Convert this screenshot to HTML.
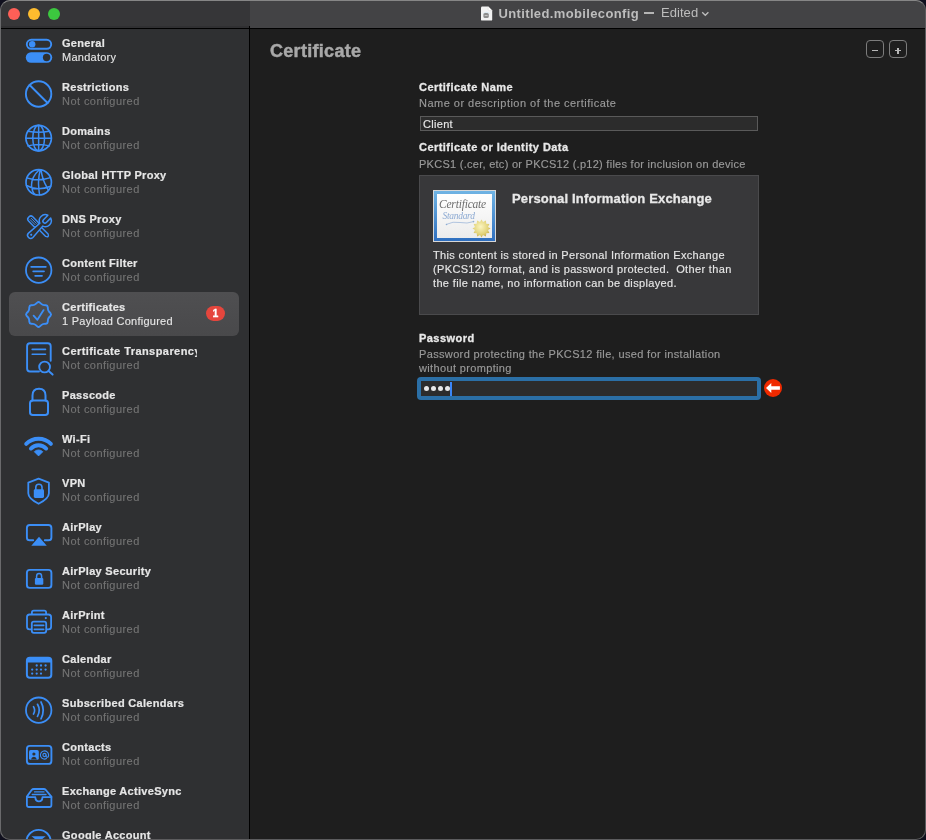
<!DOCTYPE html>
<html><head><meta charset="utf-8">
<style>
*{margin:0;padding:0;box-sizing:border-box}
html,body{width:926px;height:840px;overflow:hidden;background:#10101e;font-family:"Liberation Sans",sans-serif}
#win{position:absolute;left:0;top:0;width:926px;height:840px;border-radius:10px;overflow:hidden;background:#1e1e1e;will-change:transform}
#winborder{position:absolute;left:0;top:0;width:926px;height:840px;border-radius:10px;border:1px solid #5c5c5e;border-top-color:#868686;border-left-color:#6a6a6c;pointer-events:none;z-index:50}
#tb-side{position:absolute;left:0;top:0;width:250px;height:28px;background:#363638}
#tb-main{position:absolute;left:250px;top:0;width:676px;height:28px;background:#434345}
#tb-line{position:absolute;left:0;top:28px;width:926px;height:1px;background:#000;z-index:6}
#side{position:absolute;left:0;top:28px;width:249px;height:812px;background:#2f3032;overflow:hidden}
#vline{position:absolute;left:249px;top:26px;width:1px;height:814px;background:#000;z-index:5}
#main{position:absolute;left:250px;top:29px;width:676px;height:811px;background:#1e1e1e}
.light{position:absolute;top:8px;width:12px;height:12px;border-radius:50%}
.row{position:absolute;left:0;width:249px;height:44px}
.row .t{position:absolute;left:62px;top:9px;font-size:11px;font-weight:bold;color:#e6e6e6;white-space:nowrap;letter-spacing:0.3px;width:135px;overflow:hidden;-webkit-text-stroke:0.2px #e6e6e6}
.row .s{position:absolute;left:62px;top:23px;font-size:11px;color:#747474;white-space:nowrap;letter-spacing:0.44px;-webkit-text-stroke:0.12px currentColor}
.row svg{position:absolute;left:0;top:0}
.sel{position:absolute;left:9px;top:0;width:230px;height:44px;border-radius:6px;background:linear-gradient(#4f4f51,#49494b)}
.badge{position:absolute;left:206px;top:14.3px;width:19px;height:14.7px;border-radius:7.4px;background:#e5463d;color:#fff;font-size:10.5px;font-weight:bold;text-align:center;line-height:15px;-webkit-text-stroke:0.3px #fff}

.abs{position:absolute;white-space:nowrap}
.lbl{font-size:11px;font-weight:bold;color:#e8e8e8;letter-spacing:0.45px;-webkit-text-stroke:0.3px #e8e8e8}
.desc{font-size:11px;color:#9a9a9a;letter-spacing:0.35px;line-height:14px;-webkit-text-stroke:0.15px currentColor}
#title{position:absolute;left:270px;top:40.5px;font-size:18px;font-weight:bold;color:#a8a8a8;letter-spacing:0.3px;-webkit-text-stroke:0.45px #a8a8a8}
.pbtn{position:absolute;top:40px;width:18px;height:18px;border:1px solid #7c7c7c;border-radius:4px}
.field{position:absolute;left:420px;top:116px;width:338px;height:15px;background:#2c2c2c;border:1px solid #5a5a5a}
.certbox{position:absolute;left:419px;top:175px;width:340px;height:140px;background:#38383a;border:1px solid #4a4a4c}
</style></head><body>
<div id="win">
  <div id="tb-side"></div>
  <div id="tb-main"></div>
  <div style="position:absolute;left:0;top:26px;width:249px;height:2px;background:#303032"></div>
  <div class="light" style="left:8px;background:#fe5f57"></div>
  <div class="light" style="left:28px;background:#febc2e"></div>
  <div class="light" style="left:48px;background:#3cc83f"></div>
  <div id="side">
  <div style="position:absolute;left:0;top:-28px;width:249px;height:840px">
<div class="row" style="top:28px"><svg viewBox="0 0 60 44" width="60" height="44"><rect x="26.8" y="11.8" width="24.4" height="9" rx="4.5" fill="none" stroke="#3b8ef7" stroke-linecap="round" stroke-linejoin="round" stroke-width="1.9"/><circle cx="32.2" cy="16.3" r="3.2" fill="#3b8ef7"/><rect x="25.8" y="24.3" width="26.4" height="10.4" rx="5.2" fill="#3b8ef7"/><circle cx="46.6" cy="29.5" r="3.7" fill="#2f3032"/></svg><div class="t">General</div><div class="s" style="color:#e6e6e6;letter-spacing:0.25px">Mandatory</div></div>
<div class="row" style="top:72px"><svg viewBox="0 0 60 44" width="60" height="44"><circle cx="38.6" cy="22" r="12.7" fill="none" stroke="#3b8ef7" stroke-linecap="round" stroke-linejoin="round" stroke-width="1.9"/><path d="M29.6 13 L47.6 31" fill="none" stroke="#3b8ef7" stroke-linecap="round" stroke-linejoin="round" stroke-width="1.9"/></svg><div class="t">Restrictions</div><div class="s">Not configured</div></div>
<div class="row" style="top:116px"><svg viewBox="0 0 60 44" width="60" height="44"><circle cx="38.65" cy="22.1" r="12.75" fill="none" stroke="#3b8ef7" stroke-linecap="round" stroke-linejoin="round" stroke-width="1.7"/><ellipse cx="38.65" cy="22.1" rx="5.9" ry="12.75" fill="none" stroke="#3b8ef7" stroke-linecap="round" stroke-linejoin="round" stroke-width="1.5"/><path d="M38.65 9.4V34.8 M25.9 22.3H51.4 M27.9 15.2Q38.65 17.4 49.4 15.2 M27.9 29.9Q38.65 26.9 49.4 29.9" fill="none" stroke="#3b8ef7" stroke-linecap="round" stroke-linejoin="round" stroke-width="1.5"/></svg><div class="t">Domains</div><div class="s">Not configured</div></div>
<div class="row" style="top:160px"><svg viewBox="0 0 60 44" width="60" height="44"><circle cx="38.7" cy="22.3" r="12.7" fill="none" stroke="#3b8ef7" stroke-linecap="round" stroke-linejoin="round" stroke-width="1.7"/><path d="M39.3 9.8 Q31.5 17 31.5 25 Q31.8 31 34.5 34.2 M40.2 9.8 Q37.8 20 38.8 28 Q39.2 32.5 39.6 34.9 M41 9.9 Q42.5 20 46.5 26.5 Q47.5 28.5 48.3 30.3 M26.8 17.9 Q38 21.8 50.5 17.6 M26.5 25.5 Q37 31.5 50.7 26.2" fill="none" stroke="#3b8ef7" stroke-linecap="round" stroke-linejoin="round" stroke-width="1.5"/></svg><div class="t">Global HTTP Proxy</div><div class="s">Not configured</div></div>
<div class="row" style="top:204px"><svg viewBox="0 0 60 44" width="60" height="44"><g transform="rotate(45 39 23.3)"><rect x="24.6" y="20.3" width="12.4" height="6" rx="2.6" fill="none" stroke="#3b8ef7" stroke-linecap="round" stroke-linejoin="round" stroke-width="1.5"/><path d="M27.3 22.4H34.3 M27.3 24.2H34.3" fill="none" stroke="#3b8ef7" stroke-linecap="round" stroke-linejoin="round" stroke-width="0.9"/><path d="M37 21.6 H50.2 Q53.6 23.3 50.2 25 H37" fill="none" stroke="#3b8ef7" stroke-linecap="round" stroke-linejoin="round" stroke-width="1.4"/></g><g transform="rotate(-45 38 24)"><path d="M27.7 20.9 L42.64 22 A6 6 0 0 1 53.96 22 L47.8 22 A2 2 0 0 0 47.8 26 L53.96 26 A6 6 0 0 1 42.64 26 L27.7 27.1 A3.1 3.1 0 0 1 27.7 20.9 Z" fill="#2f3032" stroke="#3b8ef7" stroke-width="1.5" stroke-linejoin="round"/><circle cx="28.4" cy="24" r="1.1" fill="#3b8ef7"/></g></svg><div class="t">DNS Proxy</div><div class="s">Not configured</div></div>
<div class="row" style="top:248px"><svg viewBox="0 0 60 44" width="60" height="44"><circle cx="38.7" cy="22.2" r="12.7" fill="none" stroke="#3b8ef7" stroke-linecap="round" stroke-linejoin="round" stroke-width="1.8"/><path d="M31.2 18.8H45.8 M33.2 23.3H44 M35.2 27.8H42" fill="none" stroke="#3b8ef7" stroke-linecap="round" stroke-linejoin="round" stroke-width="1.8"/></svg><div class="t">Content Filter</div><div class="s">Not configured</div></div>
<div class="row" style="top:292px"><div class="sel"></div><div class="badge">1</div><svg viewBox="0 0 60 44" width="60" height="44"><path d="M37.25 10.58 Q38.55 9.40 39.85 10.58 L41.31 11.91 Q42.49 12.98 44.02 13.12 L45.91 13.30 Q47.60 13.45 47.75 15.14 L47.93 17.03 Q48.07 18.56 49.14 19.74 L50.47 21.20 Q51.65 22.50 50.47 23.80 L49.14 25.26 Q48.07 26.44 47.93 27.97 L47.75 29.86 Q47.60 31.55 45.91 31.70 L44.02 31.88 Q42.49 32.02 41.31 33.09 L39.85 34.42 Q38.55 35.60 37.25 34.42 L35.79 33.09 Q34.61 32.02 33.08 31.88 L31.19 31.70 Q29.50 31.55 29.35 29.86 L29.17 27.97 Q29.03 26.44 27.96 25.26 L26.63 23.80 Q25.45 22.50 26.63 21.20 L27.96 19.74 Q29.03 18.56 29.17 17.03 L29.35 15.14 Q29.50 13.45 31.19 13.30 L33.08 13.12 Q34.61 12.98 35.79 11.91 Z" fill="none" stroke="#3b8ef7" stroke-linecap="round" stroke-linejoin="round" stroke-width="1.9"/><path d="M33.6 23.6 L37.4 27.8 L43.6 18.1" fill="none" stroke="#3b8ef7" stroke-linecap="round" stroke-linejoin="round" stroke-width="1.8"/></svg><div class="t">Certificates</div><div class="s" style="color:#e6e6e6;letter-spacing:0.25px">1 Payload Configured</div></div>
<div class="row" style="top:336px"><svg viewBox="0 0 60 44" width="60" height="44"><path d="M39 35.5 H30 Q27.1 35.5 27.1 32.5 V10.2 Q27.1 7.3 30 7.3 H47.8 Q50.7 7.3 50.7 10.2 V24.8" fill="none" stroke="#3b8ef7" stroke-linecap="round" stroke-linejoin="round" stroke-width="1.9"/><path d="M32.2 13.4H45.5 M32.2 18.3H45.5" fill="none" stroke="#3b8ef7" stroke-linecap="round" stroke-linejoin="round" stroke-width="1.6"/><circle cx="44.6" cy="31" r="5.4" fill="none" stroke="#3b8ef7" stroke-linecap="round" stroke-linejoin="round" stroke-width="1.9"/><path d="M48.6 35 L52.6 38.6" fill="none" stroke="#3b8ef7" stroke-linecap="round" stroke-linejoin="round" stroke-width="2"/></svg><div class="t" style="letter-spacing:0.44px">Certificate Transparency</div><div class="s">Not configured</div></div>
<div class="row" style="top:380px"><svg viewBox="0 0 60 44" width="60" height="44"><rect x="30" y="20.5" width="18" height="14.6" rx="2.8" fill="none" stroke="#3b8ef7" stroke-linecap="round" stroke-linejoin="round" stroke-width="2"/><path d="M32.5 20.5 V15.5 Q32.5 8.7 39 8.7 Q45.5 8.7 45.5 15.5 V20.5" fill="none" stroke="#3b8ef7" stroke-linecap="round" stroke-linejoin="round" stroke-width="2"/></svg><div class="t">Passcode</div><div class="s">Not configured</div></div>
<div class="row" style="top:424px"><svg viewBox="0 0 60 44" width="60" height="44"><path d="M26.18 19.95 A17.2 17.2 0 0 1 50.92 19.95 M30.92 24.54 A10.6 10.6 0 0 1 46.18 24.54" fill="none" stroke="#3b8ef7" stroke-linecap="round" stroke-linejoin="round" stroke-width="3.9"/><path d="M38.55 31.9 L34.38 27.73 A5.9 5.9 0 0 1 42.72 27.73 Z" fill="#3b8ef7" stroke="#3b8ef7" stroke-width="1" stroke-linejoin="round"/></svg><div class="t">Wi-Fi</div><div class="s">Not configured</div></div>
<div class="row" style="top:468px"><svg viewBox="0 0 60 44" width="60" height="44"><path d="M38.6 10.7 L48.9 14.6 V25.3 Q48.9 30.6 38.6 35.8 Q28.3 30.6 28.3 25.3 V14.6 Z" fill="none" stroke="#3b8ef7" stroke-linecap="round" stroke-linejoin="round" stroke-width="1.8"/><rect x="33.8" y="21.3" width="10.2" height="8.6" rx="1.3" fill="#3b8ef7"/><path d="M35.8 21.8 V19.3 Q35.8 16.2 38.9 16.2 Q42 16.2 42 19.3 V21.8" fill="none" stroke="#3b8ef7" stroke-linecap="round" stroke-linejoin="round" stroke-width="1.6"/></svg><div class="t">VPN</div><div class="s">Not configured</div></div>
<div class="row" style="top:512px"><svg viewBox="0 0 60 44" width="60" height="44"><path d="M33.2 28.3 H29.8 Q26.9 28.3 26.9 25.4 V15.9 Q26.9 13 29.8 13 H48.4 Q51.4 13 51.4 15.9 V25.4 Q51.4 28.3 48.4 28.3 H44.8" fill="none" stroke="#3b8ef7" stroke-linecap="round" stroke-linejoin="round" stroke-width="1.9"/><path d="M39 24.7 L46.8 33.7 H31.3 Z" fill="#3b8ef7"/></svg><div class="t">AirPlay</div><div class="s">Not configured</div></div>
<div class="row" style="top:556px"><svg viewBox="0 0 60 44" width="60" height="44"><rect x="26.9" y="13.9" width="24.5" height="18" rx="2.9" fill="none" stroke="#3b8ef7" stroke-linecap="round" stroke-linejoin="round" stroke-width="1.9"/><rect x="34.9" y="21.9" width="8.4" height="6.9" rx="1.2" fill="#3b8ef7"/><path d="M36.6 22.3 V20.2 Q36.6 17.6 39.1 17.6 Q41.6 17.6 41.6 20.2 V22.3" fill="none" stroke="#3b8ef7" stroke-linecap="round" stroke-linejoin="round" stroke-width="1.5"/></svg><div class="t">AirPlay Security</div><div class="s">Not configured</div></div>
<div class="row" style="top:600px"><svg viewBox="0 0 60 44" width="60" height="44"><path d="M31.9 14.2 V12.5 Q31.9 10.6 33.8 10.6 H44.2 Q46.1 10.6 46.1 12.5 V14.2" fill="none" stroke="#3b8ef7" stroke-linecap="round" stroke-linejoin="round" stroke-width="1.8"/><path d="M31 29.4 H29.6 Q27 29.4 27 26.8 V17.1 Q27 14.5 29.6 14.5 H48.4 Q51.1 14.5 51.1 17.1 V26.8 Q51.1 29.4 48.4 29.4 H47" fill="none" stroke="#3b8ef7" stroke-linecap="round" stroke-linejoin="round" stroke-width="1.8"/><rect x="31.8" y="21.6" width="14.4" height="11.2" rx="2" fill="none" stroke="#3b8ef7" stroke-linecap="round" stroke-linejoin="round" stroke-width="1.8"/><path d="M34.3 25.4H43.7 M34.3 29.4H43.7" fill="none" stroke="#3b8ef7" stroke-linecap="round" stroke-linejoin="round" stroke-width="1.6"/><circle cx="45.8" cy="18.1" r="1.1" fill="#3b8ef7"/></svg><div class="t">AirPrint</div><div class="s">Not configured</div></div>
<div class="row" style="top:644px"><svg viewBox="0 0 60 44" width="60" height="44"><rect x="26.9" y="13.7" width="24.4" height="20.1" rx="3" fill="none" stroke="#3b8ef7" stroke-linecap="round" stroke-linejoin="round" stroke-width="2"/><path d="M26.9 16.7 Q26.9 13.7 29.9 13.7 H48.3 Q51.3 13.7 51.3 16.7 V18.4 H26.9Z" fill="#3b8ef7"/><circle cx="36.7" cy="21.5" r="1.15" fill="#3b8ef7"/><circle cx="41" cy="21.5" r="1.15" fill="#3b8ef7"/><circle cx="45.6" cy="21.5" r="1.15" fill="#3b8ef7"/><circle cx="32.2" cy="25.6" r="1.15" fill="#3b8ef7"/><circle cx="36.7" cy="25.6" r="1.15" fill="#3b8ef7"/><circle cx="41" cy="25.6" r="1.15" fill="#3b8ef7"/><circle cx="45.6" cy="25.6" r="1.15" fill="#3b8ef7"/><circle cx="32.2" cy="29.6" r="1.15" fill="#3b8ef7"/><circle cx="36.7" cy="29.6" r="1.15" fill="#3b8ef7"/><circle cx="41" cy="29.6" r="1.15" fill="#3b8ef7"/></svg><div class="t">Calendar</div><div class="s">Not configured</div></div>
<div class="row" style="top:688px"><svg viewBox="0 0 60 44" width="60" height="44"><circle cx="38.7" cy="22.2" r="12.7" fill="none" stroke="#3b8ef7" stroke-linecap="round" stroke-linejoin="round" stroke-width="1.8"/><path d="M33.5 18.6 Q35.8 22.3 33.5 26 M37.5 16.3 Q41 22.3 37.5 28.4 M41 14 Q45.5 22.3 41 30.8" fill="none" stroke="#3b8ef7" stroke-linecap="round" stroke-linejoin="round" stroke-width="1.7"/></svg><div class="t">Subscribed Calendars</div><div class="s">Not configured</div></div>
<div class="row" style="top:732px"><svg viewBox="0 0 60 44" width="60" height="44"><rect x="26.9" y="13.9" width="24.5" height="18" rx="2.9" fill="none" stroke="#3b8ef7" stroke-linecap="round" stroke-linejoin="round" stroke-width="1.9"/><rect x="29" y="18.1" width="9.8" height="9.7" rx="1.6" fill="#3b8ef7"/><circle cx="33.9" cy="22" r="1.6" fill="#2f3032"/><path d="M31 27.4 Q31.5 24.8 33.9 24.8 Q36.3 24.8 36.8 27.4Z" fill="#2f3032"/><circle cx="44.5" cy="23" r="1.6" fill="none" stroke="#3b8ef7" stroke-linecap="round" stroke-linejoin="round" stroke-width="1.1"/><path d="M46.1 23 V24 Q46.1 25.3 47.2 25.3 Q48.6 25.3 48.6 23 A4.1 4.1 0 1 0 46.5 26.6" fill="none" stroke="#3b8ef7" stroke-linecap="round" stroke-linejoin="round" stroke-width="1.1"/></svg><div class="t">Contacts</div><div class="s">Not configured</div></div>
<div class="row" style="top:776px"><svg viewBox="0 0 60 44" width="60" height="44"><path d="M26.9 20.6 L31.8 13.8 Q32.5 13 33.8 13 H43.8 Q45 13 45.7 13.8 L51.4 20.6 V28.9 Q51.4 31 49.3 31 H29 Q26.9 31 26.9 28.9 Z" fill="none" stroke="#3b8ef7" stroke-linecap="round" stroke-linejoin="round" stroke-width="1.8"/><path d="M26.9 21.1 H35.3 Q35.5 25.4 38.9 25.4 Q42.3 25.4 42.5 21.1 H51.4" fill="none" stroke="#3b8ef7" stroke-linecap="round" stroke-linejoin="round" stroke-width="1.8"/><path d="M34.5 15.9H44 M32.2 18.5H46" fill="none" stroke="#3b8ef7" stroke-linecap="round" stroke-linejoin="round" stroke-width="1.3"/></svg><div class="t">Exchange ActiveSync</div><div class="s">Not configured</div></div>
<div class="row" style="top:820px"><svg viewBox="0 0 60 44" width="60" height="44"><circle cx="38.6" cy="22.3" r="12.4" fill="none" stroke="#3b8ef7" stroke-linecap="round" stroke-linejoin="round" stroke-width="1.9"/><path d="M31.5 16.3 H45.7 L38.6 22 Z" fill="#3b8ef7"/></svg><div class="t">Google Account</div><div class="s">Not configured</div></div>
  </div>
  </div>
  
  <svg style="position:absolute;left:479.5px;top:5.5px" width="13" height="15" viewBox="0 0 13 15"><path d="M1 1.8 Q1 0.6 2.2 0.6 H8.2 L12.2 4.6 V13.4 Q12.2 14.6 11 14.6 H2.2 Q1 14.6 1 13.4 Z" fill="#f2f2f2"/><path d="M8.2 0.6 V3.4 Q8.2 4.6 9.4 4.6 H12.2" fill="#ffffff" stroke="#d0d0d0" stroke-width="0.4"/><path d="M3.3 7.5 Q6.5 5 9.5 7.5" fill="none" stroke="#cfe3ee" stroke-width="0.9"/><rect x="3.4" y="7" width="5.4" height="5" rx="1.6" fill="#8c8c8c"/><rect x="4.6" y="9.2" width="3" height="0.7" fill="#d8d8d8"/></svg>
  <div class="abs" style="left:498.5px;top:5.7px;font-size:13px;font-weight:bold;color:#bdbdbd;letter-spacing:0.36px">Untitled.mobileconfig</div>
  <div class="abs" style="left:643.5px;top:12.3px;width:10.5px;height:1.3px;background:#b5b5b5"></div>
  <div class="abs" style="left:661px;top:5px;font-size:13px;color:#bdbdbd;letter-spacing:0.05px">Edited</div>
  <svg style="position:absolute;left:700.5px;top:10.5px" width="9" height="6" viewBox="0 0 9 6"><path d="M1.2 1.2 L4.3 4.3 L7.4 1.2" fill="none" stroke="#bdbdbd" stroke-width="1.3"/></svg>
  <div id="tb-line"></div>
  <div id="vline"></div>
  <div id="main"></div>
  <div id="title">Certificate</div>
  <div class="pbtn" style="left:866px"><div style="position:absolute;left:5.1px;top:9.3px;width:6.2px;height:1.1px;background:#b8b8b8"></div></div>
  <div class="pbtn" style="left:889px"><div style="position:absolute;left:4.9px;top:9.4px;width:6.2px;height:1.1px;background:#b8b8b8"></div><div style="position:absolute;left:7.45px;top:7px;width:1.1px;height:5.6px;background:#b8b8b8"></div></div>
  <div class="abs lbl" style="left:419px;top:81px">Certificate Name</div>
  <div class="abs desc" style="left:419px;top:96px;letter-spacing:0.48px">Name or description of the certificate</div>
  <div class="field"></div>
  <div class="abs" style="left:423px;top:117.6px;font-size:11px;color:#e8e8e8;letter-spacing:0.3px;-webkit-text-stroke:0.15px #e8e8e8">Client</div>
  <div class="abs lbl" style="left:419px;top:141px">Certificate or Identity Data</div>
  <div class="abs desc" style="left:419px;top:157px;letter-spacing:0.27px">PKCS1 (.cer, etc) or PKCS12 (.p12) files for inclusion on device</div>
  <div class="certbox"></div>
  
  <div style="position:absolute;left:433px;top:190px;width:63px;height:52px;background:#d8d8d8">
    <div style="position:absolute;left:1px;top:1px;width:61px;height:50px;background:linear-gradient(#6fb4e4,#2f6fbf)"></div>
    <div style="position:absolute;left:4px;top:4px;width:55px;height:44px;background:linear-gradient(#ffffff,#ececec)"></div>
    <div style="position:absolute;left:6px;top:7.5px;font-family:'Liberation Serif',serif;font-style:italic;font-size:11.5px;color:#6e6e6e;letter-spacing:-0.2px">Certificate</div>
    <div style="position:absolute;left:9.5px;top:20.5px;font-family:'Liberation Serif',serif;font-style:italic;font-size:9.5px;color:#8eabd3;letter-spacing:-0.3px">Standard</div>
    <svg style="position:absolute;left:12px;top:29px" width="30" height="8" viewBox="0 0 30 8"><path d="M1 5.5 Q8 2 15 3.5 Q22 5 29 2.5" fill="none" stroke="#a8bedc" stroke-width="0.9"/><circle cx="1.5" cy="5.5" r="0.8" fill="#8eabd3"/><circle cx="28.5" cy="2.6" r="0.8" fill="#8eabd3"/></svg>
    <svg style="position:absolute;left:39px;top:28.8px" width="19" height="19" viewBox="0 0 19 19"><defs><radialGradient id="sg" cx="0.45" cy="0.4" r="0.6"><stop offset="0" stop-color="#fbf5c0"/><stop offset="0.7" stop-color="#e2d37a"/><stop offset="1" stop-color="#c6ad4c"/></radialGradient></defs><polygon points="9.5,0.5 11,3 13.9,1.6 14.3,4.7 17.4,5 16,7.9 18.5,9.5 16,11.1 17.4,14 14.3,14.3 13.9,17.4 11,16 9.5,18.5 8,16 5.1,17.4 4.7,14.3 1.6,14 3,11.1 0.5,9.5 3,7.9 1.6,5 4.7,4.7 5.1,1.6 8,3" fill="url(#sg)"/></svg>
  </div>
  <div class="abs" style="left:512px;top:191px;font-size:13px;font-weight:bold;color:#e8e8e8;letter-spacing:0.17px;-webkit-text-stroke:0.3px #e8e8e8">Personal Information Exchange</div>
  <div class="abs desc" style="left:433px;top:248px;color:#e6e6e6;white-space:pre">This content is stored in Personal Information Exchange
(PKCS12) format, and is password protected.  Other than
the file name, no information can be displayed.</div>
  <div class="abs lbl" style="left:419px;top:332px">Password</div>
  <div class="abs desc" style="left:419px;top:347px;white-space:pre">Password protecting the PKCS12 file, used for installation
without prompting</div>
  <div style="position:absolute;left:417px;top:377px;width:344px;height:23px;border-radius:4px;background:#2b6fa6"></div>
  <div style="position:absolute;left:421px;top:381px;width:336px;height:15px;background:#2c2c2c"></div>
  <div style="position:absolute;left:424px;top:386.1px;width:5px;height:5px;border-radius:50%;background:#e8e8e8"></div>
  <div style="position:absolute;left:431px;top:386.1px;width:5px;height:5px;border-radius:50%;background:#e8e8e8"></div>
  <div style="position:absolute;left:438px;top:386.1px;width:5px;height:5px;border-radius:50%;background:#e8e8e8"></div>
  <div style="position:absolute;left:445px;top:386.1px;width:5px;height:5px;border-radius:50%;background:#e8e8e8"></div>
  <div style="position:absolute;left:449.5px;top:382px;width:2px;height:13.5px;background:#3b86f8"></div>
  <svg style="position:absolute;left:764px;top:379px" width="18" height="18" viewBox="0 0 18 18"><circle cx="9" cy="9" r="9" fill="#f02a00"/><path d="M2 9 L7.3 3.9 V7.2 H15.9 V10.7 H7.3 V14 Z" fill="#fff"/></svg>

</div>
<div id="winborder"></div>
</body></html>
